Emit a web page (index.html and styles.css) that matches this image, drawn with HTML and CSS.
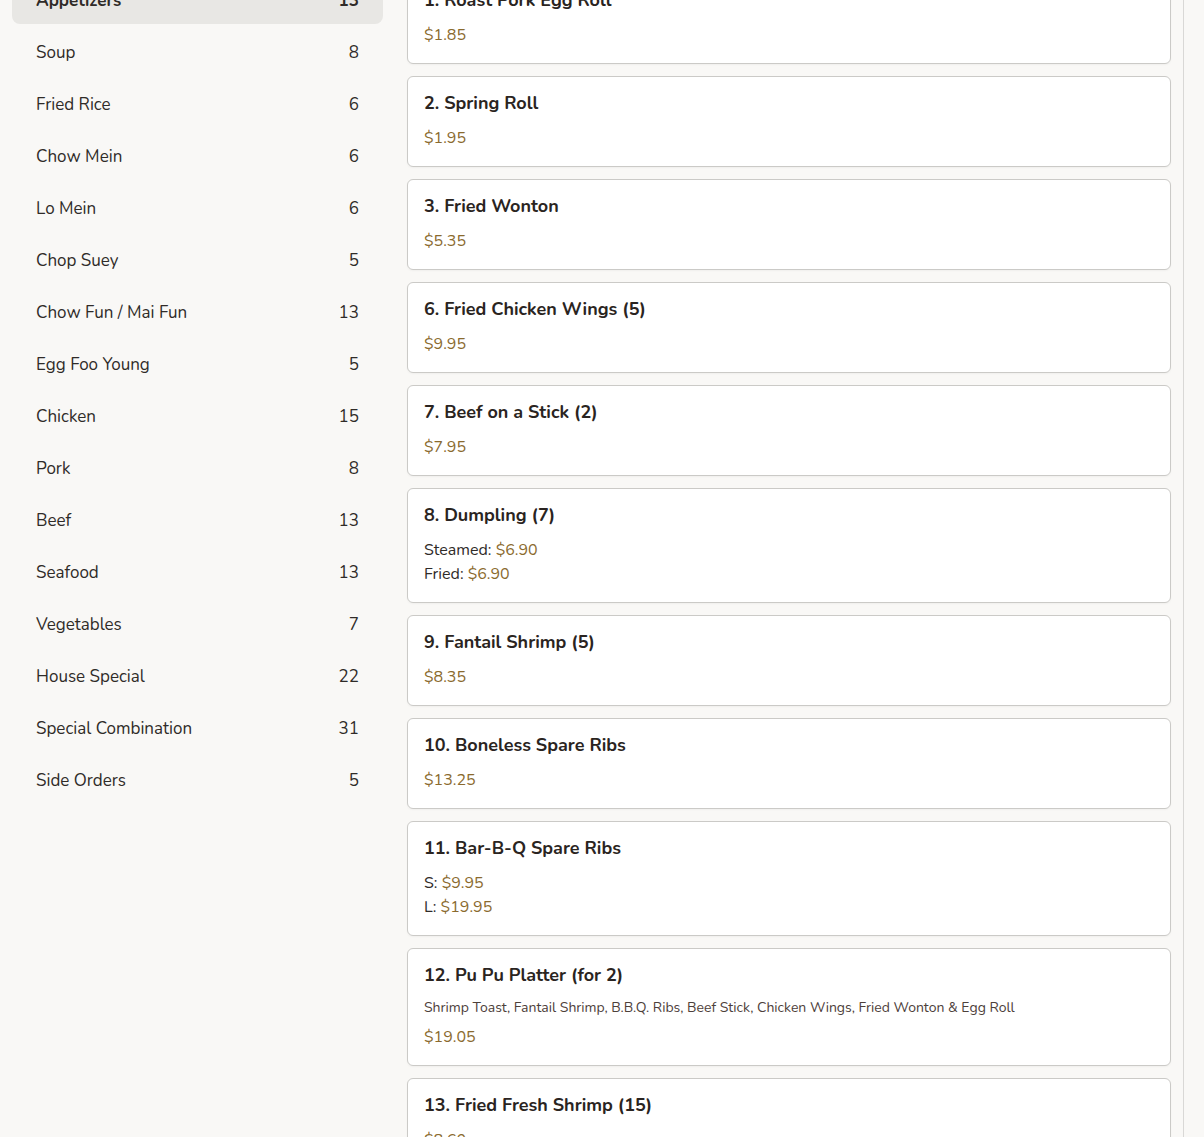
FILE: index.html
```html
<!DOCTYPE html>
<html lang="en">
<head>
<meta charset="utf-8">
<title>Menu</title>
<link rel="stylesheet" href="styles.css">
</head>
<body>
<div class="layout">
  <aside class="sidebar">
    <ul class="cats">
      <li class="cat active"><span>Appetizers</span><span>13</span></li>
      <li class="cat"><span>Soup</span><span>8</span></li>
      <li class="cat"><span>Fried Rice</span><span>6</span></li>
      <li class="cat"><span>Chow Mein</span><span>6</span></li>
      <li class="cat"><span>Lo Mein</span><span>6</span></li>
      <li class="cat"><span>Chop Suey</span><span>5</span></li>
      <li class="cat"><span>Chow Fun / Mai Fun</span><span>13</span></li>
      <li class="cat"><span>Egg Foo Young</span><span>5</span></li>
      <li class="cat"><span>Chicken</span><span>15</span></li>
      <li class="cat"><span>Pork</span><span>8</span></li>
      <li class="cat"><span>Beef</span><span>13</span></li>
      <li class="cat"><span>Seafood</span><span>13</span></li>
      <li class="cat"><span>Vegetables</span><span>7</span></li>
      <li class="cat"><span>House Special</span><span>22</span></li>
      <li class="cat"><span>Special Combination</span><span>31</span></li>
      <li class="cat"><span>Side Orders</span><span>5</span></li>
    </ul>
  </aside>
  <main class="main">
    <div class="card"><h3 class="title">1. Roast Pork Egg Roll</h3><div class="prices"><div class="price">$1.85</div></div></div>
    <div class="card"><h3 class="title">2. Spring Roll</h3><div class="prices"><div class="price">$1.95</div></div></div>
    <div class="card"><h3 class="title">3. Fried Wonton</h3><div class="prices"><div class="price">$5.35</div></div></div>
    <div class="card"><h3 class="title">6. Fried Chicken Wings (5)</h3><div class="prices"><div class="price">$9.95</div></div></div>
    <div class="card"><h3 class="title">7. Beef on a Stick (2)</h3><div class="prices"><div class="price">$7.95</div></div></div>
    <div class="card"><h3 class="title">8. Dumpling (7)</h3><div class="prices"><div class="price"><span class="label">Steamed: </span>$6.90</div><div class="price"><span class="label">Fried: </span>$6.90</div></div></div>
    <div class="card"><h3 class="title">9. Fantail Shrimp (5)</h3><div class="prices"><div class="price">$8.35</div></div></div>
    <div class="card"><h3 class="title">10. Boneless Spare Ribs</h3><div class="prices"><div class="price">$13.25</div></div></div>
    <div class="card"><h3 class="title">11. Bar-B-Q Spare Ribs</h3><div class="prices"><div class="price"><span class="label">S: </span>$9.95</div><div class="price"><span class="label">L: </span>$19.95</div></div></div>
    <div class="card"><h3 class="title">12. Pu Pu Platter (for 2)</h3><p class="desc">Shrimp Toast, Fantail Shrimp, B.B.Q. Ribs, Beef Stick, Chicken Wings, Fried Wonton &amp; Egg Roll</p><div class="prices"><div class="price">$19.05</div></div></div>
    <div class="card"><h3 class="title">13. Fried Fresh Shrimp (15)</h3><div class="prices"><div class="price">$8.60</div></div></div>
  </main>
  <div class="edge"></div>
</div>
</body>
</html>
```
FILE: styles.css
```css
* { box-sizing: border-box; }
html, body { margin: 0; padding: 0; }
body {
  background: #f9f8f6;
  font-family: "Nunito", "Lato", "Noto Sans", sans-serif;
  color: #2e2a27;
  overflow: hidden;
}
.layout {
  display: flex;
  align-items: flex-start;
  margin-top: -39px;
}
.sidebar {
  width: 395px;
  flex: none;
  padding: 15px 12px;
}
.cats {
  list-style: none;
  margin: 0;
  padding: 0;
  display: flex;
  flex-direction: column;
  gap: 4px;
}
.cat {
  display: flex;
  justify-content: space-between;
  align-items: center;
  height: 48px;
  padding: 0 24px;
  border-radius: 8px;
  font-size: 17px;
  color: #2f2b28;
}
.cat.active {
  background: #e8e7e4;
  font-weight: 700;
}
.main {
  flex: 1;
  padding: 12px 12px 0 12px;
  border-right: 1px solid #d9d8d6;
  min-height: 1300px;
  display: flex;
  flex-direction: column;
  gap: 12px;
}
.edge {
  width: 20px;
  flex: none;
}
.card {
  background: #fff;
  border: 1px solid #cbcac7;
  border-radius: 6px;
  padding: 15px 16px 16px;
  box-shadow: 0 1px 2px rgba(0, 0, 0, 0.04);
}
.title {
  margin: 0 0 12px;
  font-size: 18px;
  line-height: 22px;
  font-weight: 700;
  color: #2a2421;
}
.desc {
  margin: -2px 0 5px;
  font-size: 14px;
  line-height: 24px;
  color: #4d403a;
}
.price {
  font-size: 16px;
  line-height: 24px;
  color: #8a6a2e;
}
.label { color: #2f2b28; }
```
